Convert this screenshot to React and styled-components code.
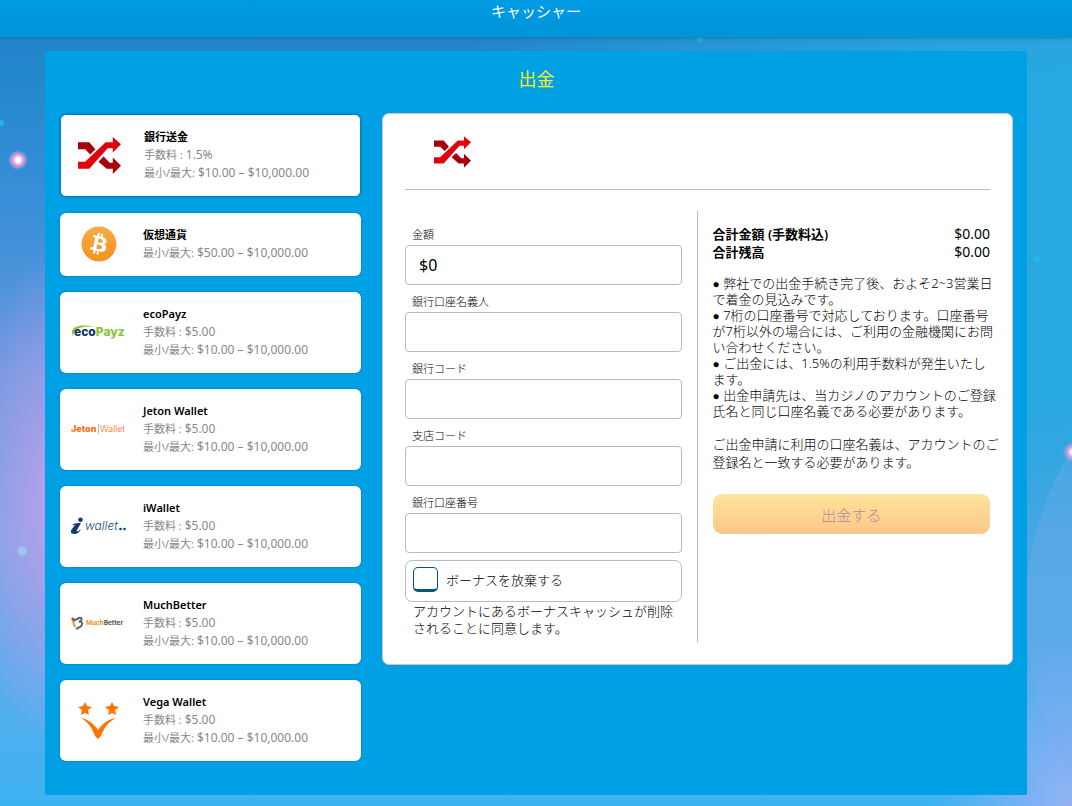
import React, { useState } from 'react'
import styled, { createGlobalStyle } from 'styled-components'
import { FaBitcoin } from 'react-icons/fa'


const GlobalStyle = createGlobalStyle`
  * {
    box-sizing: border-box;
  }

  body {
    margin: 0;
    color: #000;
    font-family: "Noto Sans", "Noto Sans CJK JP", sans-serif;
    font-size: 13px;
  }

  input, button {
    font-family: inherit;
  }
`

const Page = styled.div`
  min-height: 100vh;
  overflow: hidden;
  padding-bottom: 11px;
  background:
    radial-gradient(circle at 18px 160px, #fff 2px, #e9a0dc 5px, rgba(200, 140, 220, 0) 10px),
    radial-gradient(circle at 1px 123px, #24b4e4 2px, rgba(36, 180, 228, 0) 4px),
    radial-gradient(circle at 22px 551px, #a4c4f4 3px, rgba(164, 196, 244, 0) 6px),
    radial-gradient(circle at calc(100% - 372px) 39px, #22aee2 2px, rgba(34, 174, 226, 0) 4px),
    radial-gradient(circle at calc(100% - 35px) 259px, #26b8e8 2px, rgba(38, 184, 232, 0) 5px),
    radial-gradient(circle at calc(100% + 1px) 452px, #fff 2px, #dca0e0 5px, rgba(200, 140, 220, 0) 10px),
    radial-gradient(circle at calc(100% + 262px) 612px, rgba(130, 170, 240, 0.28) 308px, rgba(130, 170, 240, 0) 309px),
    radial-gradient(ellipse 95px 250px at 60px 500px, #b4a0ea 10%, rgba(170, 160, 232, 0) 100%),
    radial-gradient(ellipse 140px 170px at 100% 100%, #94b2f4, rgba(140, 178, 244, 0)),
    radial-gradient(ellipse 640px 540px at 100% 240px, #28a8e0 30%, rgba(40, 168, 224, 0)),
    linear-gradient(#2484c8 0, #2488cc 80px, #3c90d8 220px, #6c98e0 380px, #7ca4e8 540px, #50aeee 720px, #3cb2f2 100%);
`

const TopBar = styled.header`
  display: flex;
  justify-content: center;
  height: 37px;
  background: linear-gradient(#009be4, #0094d8);
  box-shadow: 0 1px 4px rgba(0, 90, 140, 0.5);
`

const TopTitle = styled.h1`
  margin: 0;
  color: #fff;
  font-size: 15px;
  font-weight: 400;
  line-height: 22px;
`

const Cashier = styled.main`
  margin: 14px 45px 0;
  padding: 0 14px 34px 15px;
  background: #00a0e4;
`

const SectionTitle = styled.h2`
  margin: 0;
  padding: 16px 0 22px;
  color: #ffec1e;
  font-size: 18px;
  font-weight: 400;
  line-height: 24px;
  text-align: center;
`

const Columns = styled.div`
  display: flex;
  align-items: flex-start;
  gap: 21px;
`

const MethodList = styled.div`
  display: flex;
  flex-direction: column;
  flex: 0 0 301px;
  gap: 16px;
  padding-top: 1px;
`

const MethodCard = styled.button`
  display: flex;
  align-items: center;
  gap: 17px;
  padding: 13px 11px 14px;
  border: ${props => (props.$active ? '1px solid #0280bc' : '0')};
  border-radius: 6px;
  background: #fff;
  box-shadow: 0 0 2px #02679c;
  text-align: left;
  cursor: pointer;
`

const MethodLogo = styled.span`
  display: flex;
  flex: 0 0 55px;
  justify-content: center;
`

const MethodText = styled.span`
  display: flex;
  flex-direction: column;
  color: #888;
  font-size: 11px;
  line-height: 18px;
`

const MethodName = styled.strong`
  color: #000;
  font-weight: 600;
`

const Amount = styled.span`
  font-size: 12px;
`

const Details = styled.section`
  flex: 1;
  min-width: 0;
  padding: 22px;
  border: 1px solid #c8c8c8;
  border-radius: 7px;
  background: #fff;
`

const DetailsHeader = styled.div`
  display: flex;
  padding: 0 0 21px 29px;
  border-bottom: 1px solid #bbb;
`

const DetailsBody = styled.div`
  display: grid;
  grid-template-columns: 1fr 1fr;
  margin-top: 21px;
`

const Form = styled.form`
  display: flex;
  flex-direction: column;
  gap: 7px;
  padding: 14px 15px 5px 0;
  border-right: 1px solid #bbb;
`

const Field = styled.div`
  display: flex;
  flex-direction: column;
`

const FieldLabel = styled.label`
  padding-left: 7px;
  font-size: 11px;
  font-weight: 300;
  line-height: 20px;
`

const TextInput = styled.input`
  width: 100%;
  height: 40px;
  padding: 0 13px;
  border: 1px solid #bbb;
  border-radius: 4px;
  background: #fff;
  color: #000;
  font-size: 16px;
`

const CheckRow = styled.label`
  display: flex;
  align-items: center;
  gap: 8px;
  height: 42px;
  padding: 0 7px 3px;
  border: 1px solid #bbb;
  border-radius: 7px;
  font-weight: 300;
`

const Checkbox = styled.input`
  appearance: none;
  width: 25px;
  height: 25px;
  margin: 0;
  border: 1px solid #05567e;
  border-bottom-width: 3px;
  border-radius: 5px;
  background: #fff;

  &:checked {
    background: #05567e;
  }
`

const CheckNote = styled.p`
  margin: 1px 0 0;
  padding-left: 8px;
  font-weight: 300;
  line-height: 17px;
`

const Summary = styled.div`
  min-width: 0;
  padding: 14px 0 0 15px;
`

const TotalRow = styled.div`
  display: flex;
  justify-content: space-between;
  line-height: 18px;
`

const TotalLabel = styled.span`
  font-weight: 600;
`

const TotalValue = styled.span`
  font-size: 14px;
`

const Notes = styled.p`
  margin: ${props => (props.$loose ? '16px' : '14px')} 0 0;
  font-weight: 300;
  line-height: ${props => (props.$loose ? '18px' : '16px')};
  white-space: nowrap;
`

const Bullet = styled.span`
  font-family: "DejaVu Sans", sans-serif;
  font-size: 12px;
  line-height: 1;
`

const SubmitButton = styled.button`
  width: 100%;
  height: 40px;
  margin-top: 23px;
  border: 0;
  border-radius: 9px;
  background: linear-gradient(#ffe499, #fcc68c);
  color: #b08a9c;
  font-size: 15px;
  font-weight: 300;
`


const ShuffleLogo = ({ width, height }) => (
  <svg width={width} height={height} viewBox="0 0 42 36" aria-hidden="true">
    <path d="M0 5h11l6 7-5 5-5-5H0z" fill="#a8000c" />
    <path d="M25 19l6 6h3v-5l8 8-8 8v-5h-6l-8-7z" fill="#a8000c" />
    <path d="M0 24h7L27 5h7V0l8 7-8 8v-4h-5L11 31H0z" fill="#e2000f" />
  </svg>
)

const BitcoinLogo = () => (
  <>
    <svg width="0" height="0" aria-hidden="true">
      <linearGradient id="btc" x1="0" y1="0" x2="0" y2="1">
        <stop offset="0" stopColor="#f9aa4b" />
        <stop offset="1" stopColor="#f7931a" />
      </linearGradient>
    </svg>
    <FaBitcoin size={36} fill="url(#btc)" />
  </>
)

const EcoPayzLogo = () => (
  <svg width="55" height="16" viewBox="0 0 55 16" aria-hidden="true">
    <path d="M2 12C-3 4 9-1 22 3 11 2 3 4 2 12z" fill="#8cc43c" />
    <text x="3" y="12" fontFamily="Inter, sans-serif" fontSize="12" fontWeight="800">
      <tspan fill="#0c3464">eco</tspan>
      <tspan fill="#8cc43c">Payz</tspan>
    </text>
  </svg>
)

const JetonLogo = () => (
  <svg width="55" height="12" viewBox="0 0 55 12" aria-hidden="true">
    <g fontFamily="Inter, sans-serif" fill="#ff6a10">
      <text x="0" y="9" fontSize="9" fontWeight="800">Jeton</text>
      <text x="29" y="9" fontSize="9" fontWeight="300">Wallet</text>
    </g>
    <path d="M27.500 1v10" stroke="#ffa46c" />
  </svg>
)

const IWalletLogo = () => (
  <svg width="55" height="18" viewBox="0 0 55 18" aria-hidden="true">
    <g fill="#103c70">
      <circle cx="9.500" cy="2.700" r="2.300" />
      <path d="M1 8c3-2 6-2 9-2L6 13c-1 2 1 2 4-1-1 3-4 5-7 5-4 0-4-3-2-5l3-4z" />
      <circle cx="49.500" cy="12" r="1.300" />
      <circle cx="53.500" cy="12" r="1.300" />
    </g>
    <text x="14" y="13" fontFamily="Inter, sans-serif" fontSize="12" fontStyle="italic" fontWeight="300" fill="#244c7c">wallet</text>
  </svg>
)

const MuchBetterLogo = () => (
  <svg width="55" height="14" viewBox="0 0 55 14" aria-hidden="true">
    <path d="M1 2l3 9" fill="none" stroke="#f09428" strokeWidth="2" />
    <path d="M1 2l3 3M4 4l4-2c3-1 4 2 0 4 4-1 4 3 1 5l-4 2" fill="none" stroke="#606468" strokeWidth="2" />
    <text x="15" y="9" fontFamily="Roboto, sans-serif" fontSize="7" fontWeight="700">
      <tspan fill="#f09428">Much</tspan>
      <tspan fill="#55585c">Better</tspan>
    </text>
  </svg>
)

const VegaLogo = () => (
  <svg width="41" height="37" viewBox="0 0 41 37" aria-hidden="true">
    <g fill="#ff7300">
      <path d="M7 0l2 4 5 1-4 3 1 5-4-2-4 2 1-5-4-3 5-1z" />
      <path d="M34 0l2 4 5 1-4 3 1 5-4-2-4 2 1-5-4-3 5-1z" />
      <path d="M3 16c7 1 13 6 17 12 4-6 10-11 18-12-8 4-12 10-15 18l-3 3-3-3C14 26 10 20 3 16z" />
    </g>
  </svg>
)


const METHODS = [
  { id: 'bank', name: '銀行送金', fee: '1.5%', min: '$10.00', logo: <ShuffleLogo width={43} height={37} /> },
  { id: 'crypto', name: '仮想通貨', min: '$50.00', logo: <BitcoinLogo /> },
  { id: 'ecopayz', name: 'ecoPayz', fee: '$5.00', min: '$10.00', logo: <EcoPayzLogo /> },
  { id: 'jeton', name: 'Jeton Wallet', fee: '$5.00', min: '$10.00', logo: <JetonLogo /> },
  { id: 'iwallet', name: 'iWallet', fee: '$5.00', min: '$10.00', logo: <IWalletLogo /> },
  { id: 'muchbetter', name: 'MuchBetter', fee: '$5.00', min: '$10.00', logo: <MuchBetterLogo /> },
  { id: 'vega', name: 'Vega Wallet', fee: '$5.00', min: '$10.00', logo: <VegaLogo /> },
]

const FIELDS = [
  { id: 'amount', label: '金額', value: '$0' },
  { id: 'holder', label: '銀行口座名義人' },
  { id: 'bankCode', label: '銀行コード' },
  { id: 'branchCode', label: '支店コード' },
  { id: 'accountNumber', label: '銀行口座番号' },
]

const Method = ({ method, active, onSelect }) => (
  <MethodCard type="button" $active={active} onClick={onSelect}>
    <MethodLogo>{method.logo}</MethodLogo>
    <MethodText>
      <MethodName>{method.name}</MethodName>
      {method.fee && <span>手数料 : <Amount>{method.fee}</Amount></span>}
      <span>最小/最大: <Amount>{method.min} – $10,000.00</Amount></span>
    </MethodText>
  </MethodCard>
)

const WithdrawForm = () => (
  <Form>
    {FIELDS.map(field => (
      <Field key={field.id}>
        <FieldLabel htmlFor={field.id}>{field.label}</FieldLabel>
        <TextInput id={field.id} type="text" defaultValue={field.value} />
      </Field>
    ))}
    <div>
      <CheckRow>
        <Checkbox type="checkbox" />
        ボーナスを放棄する
      </CheckRow>
      <CheckNote>
        アカウントにあるボーナスキャッシュが削除<br />
        されることに同意します。
      </CheckNote>
    </div>
  </Form>
)

const App = () => {
  const [selected, setSelected] = useState('bank')

  return (
    <Page lang="ja">
      <GlobalStyle />
      <TopBar>
        <TopTitle>キャッシャー</TopTitle>
      </TopBar>
      <Cashier>
        <SectionTitle>出金</SectionTitle>
        <Columns>
          <MethodList>
            {METHODS.map(method => (
              <Method
                key={method.id}
                method={method}
                active={method.id === selected}
                onSelect={() => setSelected(method.id)}
              />
            ))}
          </MethodList>
          <Details>
            <DetailsHeader>
              <ShuffleLogo width={37} height={32} />
            </DetailsHeader>
            <DetailsBody>
              <WithdrawForm />
              <Summary>
                <TotalRow>
                  <TotalLabel>合計金額 (手数料込)</TotalLabel>
                  <TotalValue>$0.00</TotalValue>
                </TotalRow>
                <TotalRow>
                  <TotalLabel>合計残高</TotalLabel>
                  <TotalValue>$0.00</TotalValue>
                </TotalRow>
                <Notes>
                  <Bullet>●</Bullet> 弊社での出金手続き完了後、およそ2~3営業日<br />
                  で着金の見込みです。<br />
                  <Bullet>●</Bullet> 7桁の口座番号で対応しております。口座番号<br />
                  が7桁以外の場合には、ご利用の金融機関にお問<br />
                  い合わせください。<br />
                  <Bullet>●</Bullet> ご出金には、1.5%の利用手数料が発生いたし<br />
                  ます。<br />
                  <Bullet>●</Bullet> 出金申請先は、当カジノのアカウントのご登録<br />
                  氏名と同じ口座名義である必要があります。
                </Notes>
                <Notes $loose>
                  ご出金申請に利用の口座名義は、アカウントのご<br />
                  登録名と一致する必要があります。
                </Notes>
                <SubmitButton type="button" disabled>出金する</SubmitButton>
              </Summary>
            </DetailsBody>
          </Details>
        </Columns>
      </Cashier>
    </Page>
  )
}

export default App
